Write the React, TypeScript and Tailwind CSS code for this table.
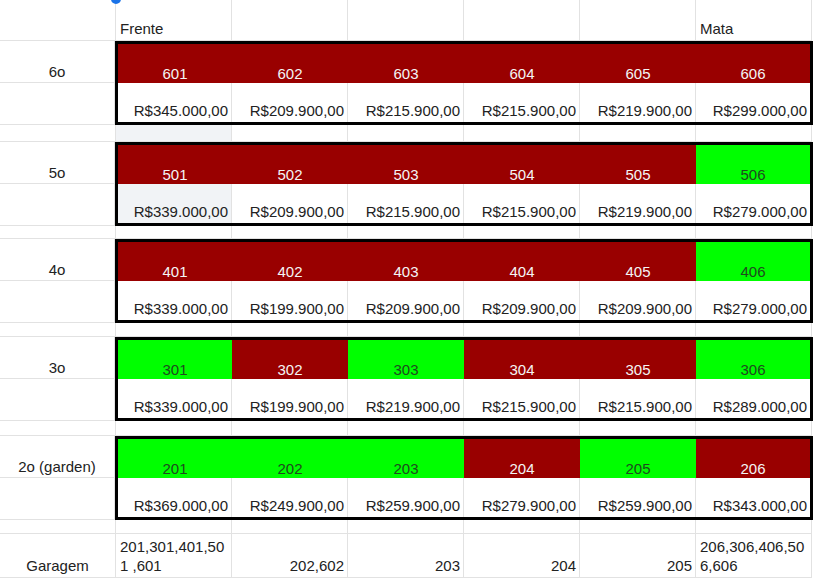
import React from 'react';

type Unit = { n: string; sold: boolean };

interface Floor {
  label: string;
  units: Unit[];
  prices: string[];
  gap: string;
}

const r = (n: string): Unit => ({ n, sold: true });
const g = (n: string): Unit => ({ n, sold: false });

const floors: Floor[] = [
  {
    label: '6o',
    units: [r('601'), r('602'), r('603'), r('604'), r('605'), r('606')],
    prices: ['R$345.000,00', 'R$209.900,00', 'R$215.900,00', 'R$215.900,00', 'R$219.900,00', 'R$299.000,00'],
    gap: 'h-[17px]',
  },
  {
    label: '5o',
    units: [r('501'), r('502'), r('503'), r('504'), r('505'), g('506')],
    prices: ['R$339.000,00', 'R$209.900,00', 'R$215.900,00', 'R$215.900,00', 'R$219.900,00', 'R$279.000,00'],
    gap: 'h-[13px]',
  },
  {
    label: '4o',
    units: [r('401'), r('402'), r('403'), r('404'), r('405'), g('406')],
    prices: ['R$339.000,00', 'R$199.900,00', 'R$209.900,00', 'R$209.900,00', 'R$209.900,00', 'R$279.000,00'],
    gap: 'h-[14px]',
  },
  {
    label: '3o',
    units: [g('301'), r('302'), g('303'), r('304'), r('305'), g('306')],
    prices: ['R$339.000,00', 'R$199.900,00', 'R$219.900,00', 'R$215.900,00', 'R$215.900,00', 'R$289.000,00'],
    gap: 'h-[15px]',
  },
  {
    label: '2o (garden)',
    units: [g('201'), g('202'), g('203'), r('204'), g('205'), r('206')],
    prices: ['R$369.000,00', 'R$249.900,00', 'R$259.900,00', 'R$279.900,00', 'R$259.900,00', 'R$343.000,00'],
    gap: 'h-[14px]',
  },
];

// inner widths of the six unit columns inside the 3px black frame
const inner = ['w-[114px]', 'w-[116px]', 'w-[116px]', 'w-[116px]', 'w-[116px]', 'w-[114px]'];

const grid = 'border-r border-b border-[#e2e2e2]';

const GapRow: React.FC<{ h: string; shadeB?: boolean }> = ({ h, shadeB }) => (
  <div className={`flex ${h}`}>
    {Array.from({ length: 7 }).map((_, i) => (
      <div
        key={i}
        className={`w-[116px] shrink-0 ${grid} ${i === 1 && shadeB ? 'bg-[#f1f3f6]' : ''}`}
      />
    ))}
  </div>
);

export default function App() {
  return (
    <div className="relative w-[813px] h-[578px] overflow-hidden bg-white text-[15px] leading-[17px] text-[#222] font-['Liberation_Sans',Arial,sans-serif]">
      {/* header */}
      <div className="flex h-[41px]">
        <div className={`w-[116px] shrink-0 ${grid}`} />
        <div className={`w-[116px] shrink-0 ${grid} flex items-end px-[4px] pb-[3px]`}>Frente</div>
        <div className={`w-[116px] shrink-0 ${grid}`} />
        <div className={`w-[116px] shrink-0 ${grid}`} />
        <div className={`w-[116px] shrink-0 ${grid}`} />
        <div className={`w-[116px] shrink-0 ${grid}`} />
        <div className={`w-[116px] shrink-0 ${grid} flex items-end px-[4px] pb-[3px]`}>Mata</div>
      </div>

      {floors.map((f, fi) => (
        <React.Fragment key={f.label}>
          <div className="flex h-[84px]">
            <div className="w-[115px] shrink-0 flex flex-col">
              <div className={`h-[42px] ${grid} flex items-end justify-center pb-[2px]`}>{f.label}</div>
              <div className={`flex-1 ${grid}`} />
            </div>
            <div className="w-[698px] shrink-0 border-[3px] border-black flex flex-col">
              <div className="flex h-[39px]">
                {f.units.map((u, i) => (
                  <div
                    key={u.n}
                    className={`${inner[i]} shrink-0 flex items-end justify-center pb-[1px] ${
                      u.sold ? 'bg-[#990000] text-[#f4f4f4]' : 'bg-[#00ff00] text-[#1f4a1f]'
                    }`}
                  >
                    {u.n}
                  </div>
                ))}
              </div>
              <div className="flex flex-1">
                {f.prices.map((p, i) => (
                  <div
                    key={i}
                    className={`${inner[i]} shrink-0 flex items-end justify-end pr-[3px] pb-[3px] ${
                      i < 5 ? 'border-r border-[#e2e2e2]' : ''
                    } ${fi === 1 && i === 0 ? 'bg-[#f1f3f6]' : ''}`}
                  >
                    {p}
                  </div>
                ))}
              </div>
            </div>
          </div>
          <GapRow h={f.gap} shadeB={fi === 0} />
        </React.Fragment>
      ))}

      {/* garagem */}
      <div className="flex h-[44px] leading-[19px]">
        <div className={`w-[116px] shrink-0 ${grid} flex items-end justify-center pb-[2px]`}>Garagem</div>
        <div className={`w-[116px] shrink-0 ${grid} flex items-end px-[4px] pb-[2px]`}>
          <span>
            201,301,401,50
            <br />1 ,601
          </span>
        </div>
        <div className={`w-[116px] shrink-0 ${grid} flex items-end justify-end pr-[3px] pb-[2px]`}>202,602</div>
        <div className={`w-[116px] shrink-0 ${grid} flex items-end justify-end pr-[3px] pb-[2px]`}>203</div>
        <div className={`w-[116px] shrink-0 ${grid} flex items-end justify-end pr-[3px] pb-[2px]`}>204</div>
        <div className={`w-[116px] shrink-0 ${grid} flex items-end justify-end pr-[3px] pb-[2px]`}>205</div>
        <div className={`w-[116px] shrink-0 ${grid} flex items-end px-[4px] pb-[2px]`}>
          <span>
            206,306,406,50
            <br />6,606
          </span>
        </div>
      </div>

      {/* selection handle */}
      <div className="absolute left-[111px] top-[-6px] w-[10px] h-[10px] rounded-full bg-[#1a73e8]" />
    </div>
  );
}
